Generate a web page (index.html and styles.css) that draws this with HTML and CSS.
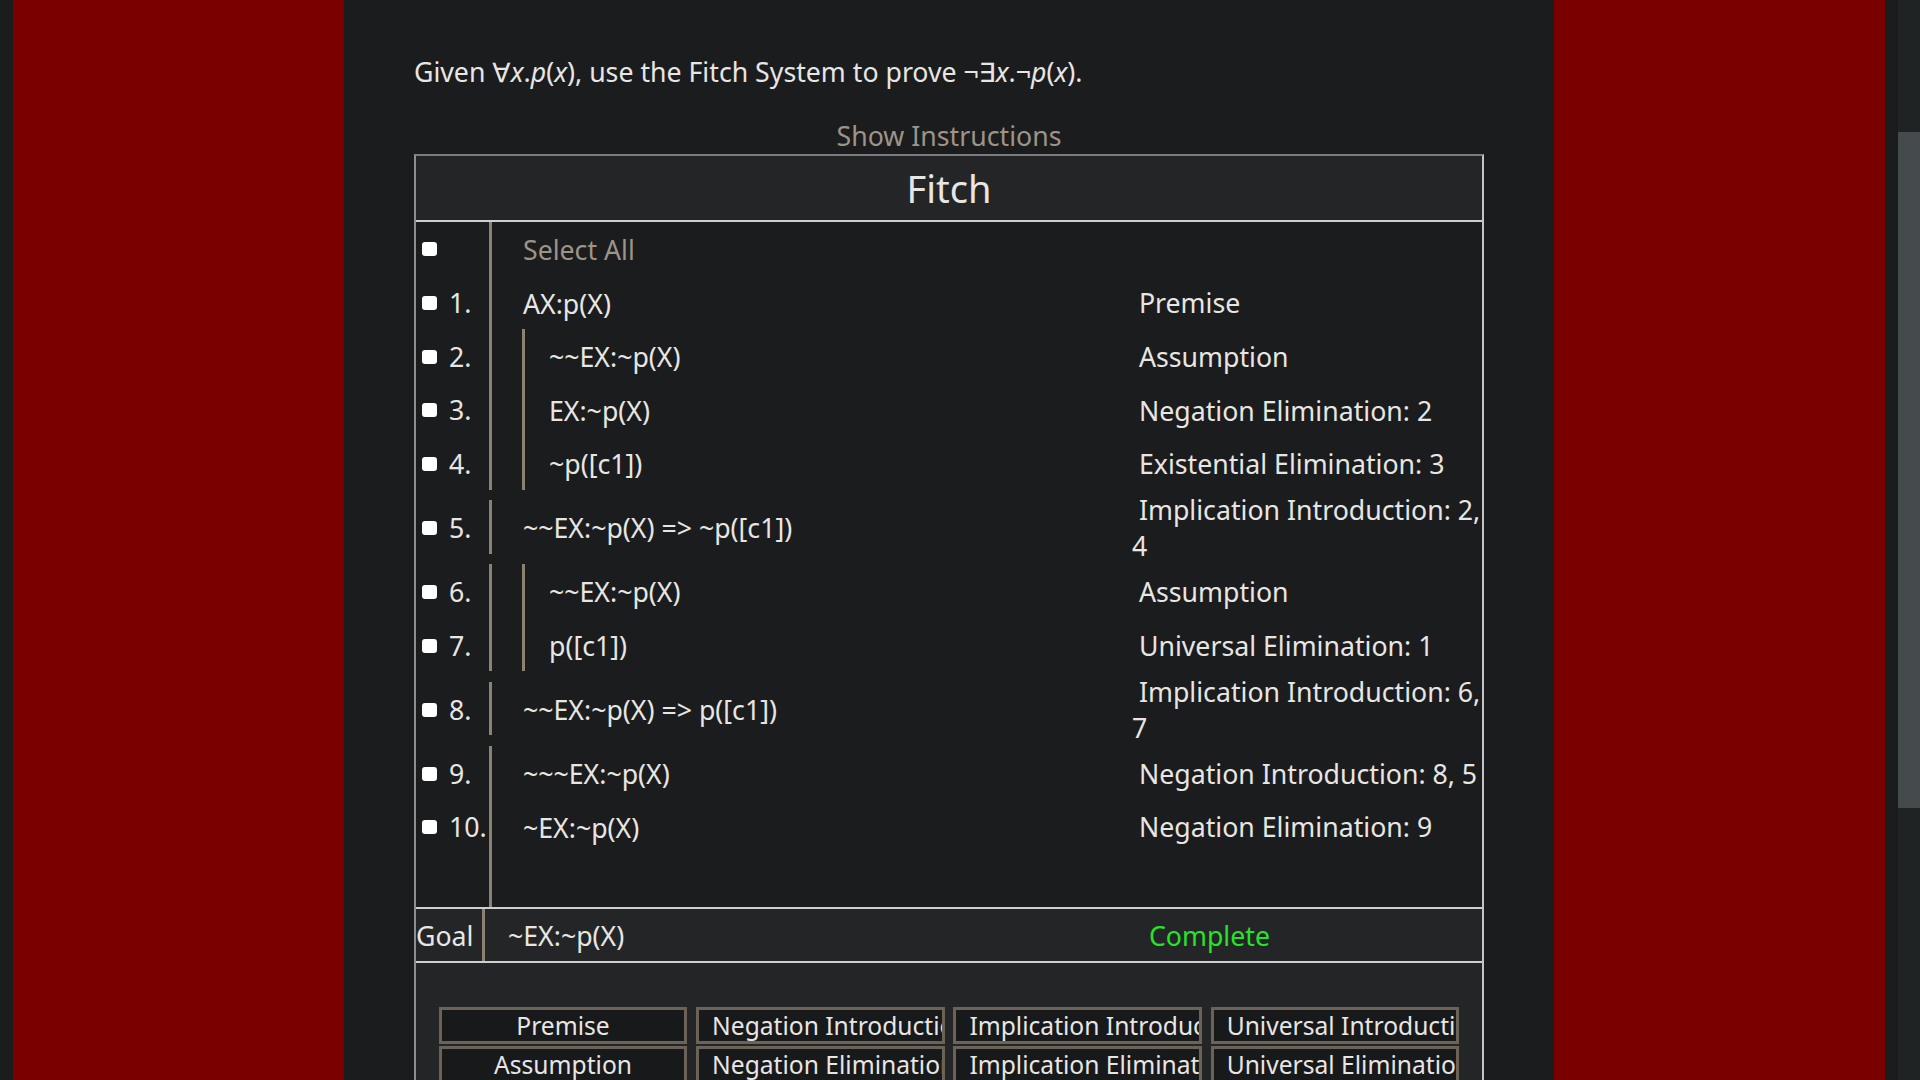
FILE: index.html
```html
<!DOCTYPE html>
<html lang="en">
<head>
<meta charset="utf-8">
<title>Fitch</title>
<link rel="stylesheet" href="styles.css">
</head>
<body>
<div class="screen">
  <div class="frame">
    <main class="main">
      <p class="prompt">Given ∀<i>x</i>.<i>p</i>(<i>x</i>), use the Fitch System to prove ¬∃<i>x</i>.¬<i>p</i>(<i>x</i>).</p>
      <div class="show">Show Instructions</div>
      <section class="fitch">
        <div class="fitch-head">Fitch</div>
        <div class="proof">
          <div class="row">
            <div class="num"><input class="box" type="checkbox"></div>
            <div class="formula muted">Select All</div>
            <div class="just"></div>
          </div>
          <div class="row">
            <div class="num"><input class="box" type="checkbox"><span>1.</span></div>
            <div class="formula">AX:p(X)</div>
            <div class="just">&nbsp;Premise</div>
          </div>
          <div class="row">
            <div class="num"><input class="box" type="checkbox"><span>2.</span></div>
            <div class="formula nested"><div class="sub">~~EX:~p(X)</div></div>
            <div class="just">&nbsp;Assumption</div>
          </div>
          <div class="row">
            <div class="num"><input class="box" type="checkbox"><span>3.</span></div>
            <div class="formula nested"><div class="sub">EX:~p(X)</div></div>
            <div class="just">&nbsp;Negation Elimination: 2</div>
          </div>
          <div class="row">
            <div class="num"><input class="box" type="checkbox"><span>4.</span></div>
            <div class="formula nested"><div class="sub">~p([c1])</div></div>
            <div class="just">&nbsp;Existential Elimination: 3</div>
          </div>
          <div class="row">
            <div class="num"><input class="box" type="checkbox"><span>5.</span></div>
            <div class="formula">~~EX:~p(X) =&gt; ~p([c1])</div>
            <div class="just">&nbsp;Implication Introduction: 2, 4</div>
          </div>
          <div class="row">
            <div class="num"><input class="box" type="checkbox"><span>6.</span></div>
            <div class="formula nested"><div class="sub">~~EX:~p(X)</div></div>
            <div class="just">&nbsp;Assumption</div>
          </div>
          <div class="row">
            <div class="num"><input class="box" type="checkbox"><span>7.</span></div>
            <div class="formula nested"><div class="sub">p([c1])</div></div>
            <div class="just">&nbsp;Universal Elimination: 1</div>
          </div>
          <div class="row">
            <div class="num"><input class="box" type="checkbox"><span>8.</span></div>
            <div class="formula">~~EX:~p(X) =&gt; p([c1])</div>
            <div class="just">&nbsp;Implication Introduction: 6, 7</div>
          </div>
          <div class="row">
            <div class="num"><input class="box" type="checkbox"><span>9.</span></div>
            <div class="formula">~~~EX:~p(X)</div>
            <div class="just">&nbsp;Negation Introduction: 8, 5</div>
          </div>
          <div class="row">
            <div class="num"><input class="box" type="checkbox"><span>10.</span></div>
            <div class="formula">~EX:~p(X)</div>
            <div class="just">&nbsp;Negation Elimination: 9</div>
          </div>
          <div class="row">
            <div class="num"></div>
            <div class="formula">&nbsp;</div>
            <div class="just"></div>
          </div>
        </div>
        <div class="goal">
          <div class="goal-label">Goal</div>
          <div class="goal-formula">~EX:~p(X)</div>
          <div class="goal-status">Complete</div>
        </div>
        <div class="rules">
          <button class="rule">Premise</button>
          <button class="rule">Negation Introduction</button>
          <button class="rule">Implication Introduction</button>
          <button class="rule">Universal Introduction</button>
          <button class="rule">Assumption</button>
          <button class="rule">Negation Elimination</button>
          <button class="rule">Implication Elimination</button>
          <button class="rule">Universal Elimination</button>
          <button class="rule">Reiteration</button>
          <button class="rule">And Introduction</button>
          <button class="rule">Or Introduction</button>
          <button class="rule">Existential Introduction</button>
        </div>
      </section>
    </main>
  </div>
</div>
<div class="scrollbar"><div class="thumb"></div></div>
</body>
</html>
```

FILE: styles.css
```css
* { box-sizing: border-box; }
html { overflow: hidden; }
body {
  margin: 0;
  background: #1b1c1e;
  font-family: "Noto Sans", "DejaVu Sans", sans-serif;
  color: #e8e6e3;
}
.screen {
  margin-right: 22px;
  padding: 0 13px;
  min-height: 100vh;
  background: #1b1c1e;
}
.frame {
  display: flex;
  justify-content: center;
  background: #7a0000;
  min-height: 100vh;
}
.main {
  width: 1210px;
  background: #1b1c1e;
  padding: 54px 70px 40px;
  font-size: 26.7px;
  line-height: 36px;
}
.prompt { margin: 0; }
.show {
  margin-top: 27.5px;
  height: 36.5px;
  text-align: center;
  color: #9d9488;
}
.fitch {
  border: 2px solid;
  border-color: #7c7c7c #c4c4c4 #c4c4c4 #8e8e8e;
}
.fitch-head {
  background: #232527;
  text-align: center;
  font-size: 38px;
  line-height: 52px;
  padding: 6px 0 5.7px;
  border-bottom: 2px solid #cfcfcf;
}
.proof { background: #1b1c1e; }
.row {
  display: grid;
  grid-template-columns: 73.3px 642.7px 1fr;
  align-items: center;
}
.num {
  display: flex;
  align-items: center;
  gap: 12px;
  padding: 2px 0 0 6px;
  white-space: nowrap;
}
.box {
  appearance: none;
  -webkit-appearance: none;
  width: 15px;
  height: 14px;
  margin: 0;
  border-radius: 3px;
  background: #ffffff;
  flex: none;
}
.formula {
  border-left: 3px solid #8c8273;
  padding: 10.3px 0 7.3px 30.7px;
  white-space: nowrap;
}
.formula.nested {
  padding: 0 0 0 29.7px;
}
.sub {
  border-left: 3px solid #8c8273;
  padding: 10.3px 0 7.3px 24px;
}
.muted { color: #9d9488; }
.just { padding: 2.5px 0 0; }
.goal {
  display: flex;
  background: #232527;
  border-top: 2px solid #cfcfcf;
  border-bottom: 2px solid #cfcfcf;
}
.goal-label {
  width: 65.7px;
  padding: 9.15px 0 7.15px;
}
.goal-formula {
  flex: 1;
  border-left: 3px solid #8c8273;
  padding: 9.15px 0 7.15px 23.3px;
}
.goal-status {
  width: 545px;
  text-align: center;
  padding: 9.15px 0 7.15px;
  color: #27e327;
}
.rules {
  background: #232527;
  padding: 44px 0 60px;
  display: grid;
  grid-template-columns: repeat(4, 248.5px);
  column-gap: 8.8px;
  row-gap: 2px;
  justify-content: center;
}
.rule {
  height: 37px;
  background: #18191b;
  border: 3px solid #6b6358;
  color: #e8e6e3;
  font-family: "Noto Sans", "DejaVu Sans", sans-serif;
  font-size: 24.6px;
  line-height: 31px;
  padding: 0 13px;
  white-space: nowrap;
  overflow: hidden;
  text-align: center;
}
.scrollbar {
  position: fixed;
  top: 0;
  right: 0;
  width: 22px;
  height: 100vh;
  background: #202324;
}
.thumb {
  margin-top: 132px;
  height: 676px;
  background: #454a4d;
}
```
